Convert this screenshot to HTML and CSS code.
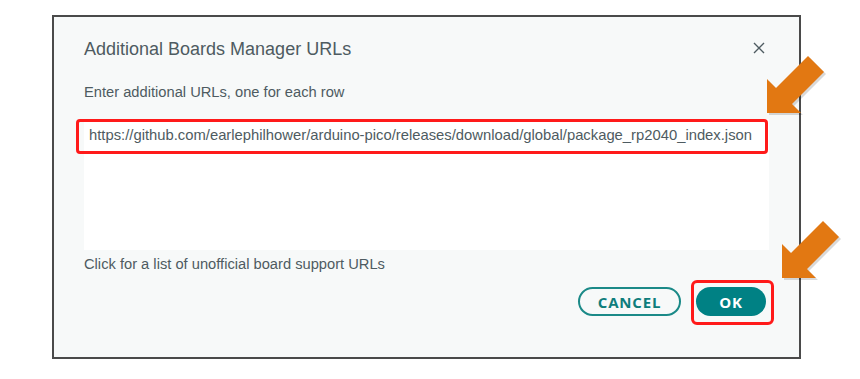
FILE: index.html
```html
<!DOCTYPE html>
<html>
    <head>
        <meta charset="utf-8">
        <link rel="stylesheet" href="styles.css">
        <title>Additional Boards Manager URLs</title>
    </head>
    <body>
        <div class="dialog">
            <div class="dialog-header">
                <h1 class="dialog-title">Additional Boards Manager URLs</h1>
                <svg class="close" width="12" height="12" viewBox="0 0 12 12">
                    <path d="M1 1 L11 11 M11 1 L1 11" stroke="#4e5b61" stroke-width="1.4" fill="none"/>
                </svg>
            </div>

            <p class="hint">Enter additional URLs, one for each row</p>

            <div class="urls">
                <div class="url-row">https://github.com/earlephilhower/arduino-pico/releases/download/global/package_rp2040_index.json</div>
                <div class="mark mark-url"></div>
            </div>

            <p class="link">Click for a list of unofficial board support URLs</p>

            <div class="buttons">
                <button class="btn btn-secondary">CANCEL</button>
                <div class="ok-wrap">
                    <button class="btn btn-primary">OK</button>
                    <div class="mark mark-ok"></div>
                </div>
            </div>
        </div>

        <!-- annotation arrows -->
        <svg class="arrows" width="860" height="379" viewBox="0 0 860 379">
            <g id="arrow">
                <polygon points="769,115 769,81 778,90 810,58 826,74 794,106 803,115" fill="#000" opacity="0.15"/>
                <polygon points="767,113 767,79 776,88 808,56 824,72 792,104 801,113" fill="#e27812"/>
            </g>
            <use href="#arrow" x="15" y="165"/>
        </svg>
    </body>
</html>
```

FILE: styles.css
```css
body {
    margin: 0;
    background: #ffffff;
    font-family: "Liberation Sans", Arial, sans-serif;
    color: #4e5b61;
}

.dialog {
    margin: 15px 0 0 52px;
    width: 749px;
    height: 344px;
    box-sizing: border-box;
    border: 2px solid #4a4a4a;
    background: #f7f9f9;
    padding: 20px 30px 0 30px;
}

.dialog-header {
    display: flex;
    align-items: center;
    justify-content: space-between;
    padding-right: 4px;
}

.dialog-title {
    margin: 0;
    font-size: 18px;
    font-weight: normal;
    line-height: 24px;
}

.close {
    display: block;
    margin-top: -2px;
}

.hint {
    margin: 22px 0 0 0;
    font-size: 14.7px;
    line-height: 18px;
}

.urls {
    position: relative;
    margin-top: 18px;
    height: 131px;
    background: #ffffff;
    padding: 8px 5px 0 5px;
    box-sizing: border-box;
}

.url-row {
    font-size: 14.8px;
    line-height: 17px;
    white-space: nowrap;
}

.mark {
    position: absolute;
    border: 3px solid #ff1a1a;
    border-radius: 4px;
    box-sizing: border-box;
}

.mark-url {
    left: -8px;
    top: 0;
    width: 692px;
    height: 35px;
}

.link {
    margin: 5px 0 0 0;
    font-size: 14.7px;
    line-height: 18px;
}

.buttons {
    display: flex;
    justify-content: flex-end;
    gap: 15px;
    margin-top: 14px;
    padding-right: 3px;
}

.btn {
    height: 29px;
    box-sizing: border-box;
    border-radius: 15px;
    font-family: "Open Sans", sans-serif;
    font-weight: 700;
    font-size: 15px;
    letter-spacing: 0.8px;
    padding: 0;
}

.btn-secondary {
    width: 103px;
    border: 2px solid #1b8a88;
    background: transparent;
    color: #0e7d7c;
}

.btn-primary {
    width: 70px;
    border: none;
    background: #008184;
    color: #ffffff;
}

.ok-wrap {
    position: relative;
}

.mark-ok {
    left: -5px;
    top: -7px;
    width: 83px;
    height: 45px;
    border-radius: 6px;
}

.arrows {
    position: absolute;
    left: 0;
    top: 0;
    pointer-events: none;
}
```
